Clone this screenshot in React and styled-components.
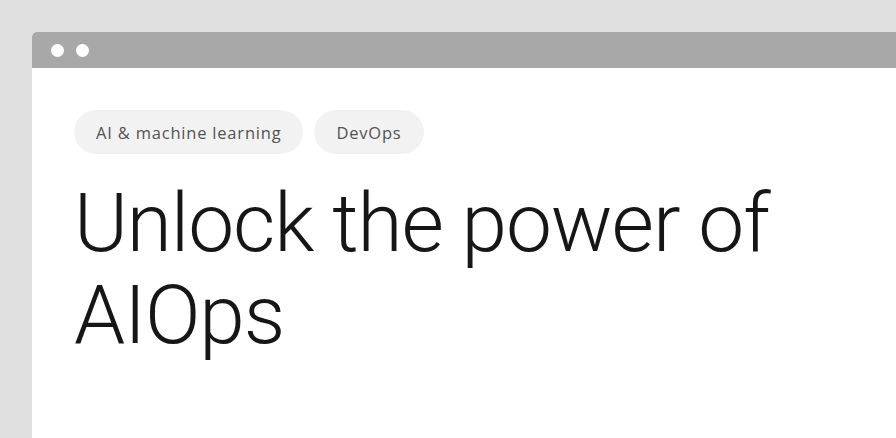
import React from "react";
import styled, { createGlobalStyle } from "styled-components";

const GlobalStyle = createGlobalStyle`
  html, body {
    margin: 0;
    padding: 0;
    background: #e0e0e0;
    height: 100%;
    overflow: hidden;
  }
  body {
    font-family: Roboto, "Liberation Sans", sans-serif;
  }
`;

const tags = ["AI & machine learning", "DevOps"];

export default function App() {
  return (
    <>
      <GlobalStyle />
      <Page>
        <Window>
          <TitleBar>
            <Dot />
            <Dot />
          </TitleBar>
          <Content>
            <TagList>
              {tags.map((tag) => (
                <Tag key={tag}>{tag}</Tag>
              ))}
            </TagList>
            <Heading>
              Unlock the power of
              <br />
              AIOps
            </Heading>
          </Content>
        </Window>
      </Page>
    </>
  );
}

const Page = styled.div`
  padding: 32px 0 0 32px;
  height: 438px;
  box-sizing: border-box;
`;

const Window = styled.div`
  height: 100%;
  background: #ffffff;
  border-top-left-radius: 5px;
  overflow: hidden;
  display: flex;
  flex-direction: column;
`;

const TitleBar = styled.div`
  display: flex;
  align-items: center;
  gap: 12px;
  height: 36px;
  padding-left: 19px;
  background: #a8a8a8;
  flex-shrink: 0;
`;

const Dot = styled.span`
  width: 13px;
  height: 13px;
  border-radius: 50%;
  background: #ffffff;
`;

const Content = styled.div`
  padding: 42px 42px 0;
`;

const TagList = styled.div`
  display: flex;
  gap: 11px;
`;

const Tag = styled.span`
  display: inline-flex;
  align-items: center;
  height: 44px;
  padding: 0 22px;
  border-radius: 22px;
  background: #f2f2f2;
  color: #525252;
  font-family: "Open Sans", Roboto, sans-serif;
  font-size: 16.5px;
  letter-spacing: 0.8px;
`;

const Heading = styled.h1`
  margin: 23px 0 0;
  font-size: 82px;
  font-weight: 300;
  line-height: 92px;
  letter-spacing: -1.1px;
  color: #161616;
`;
